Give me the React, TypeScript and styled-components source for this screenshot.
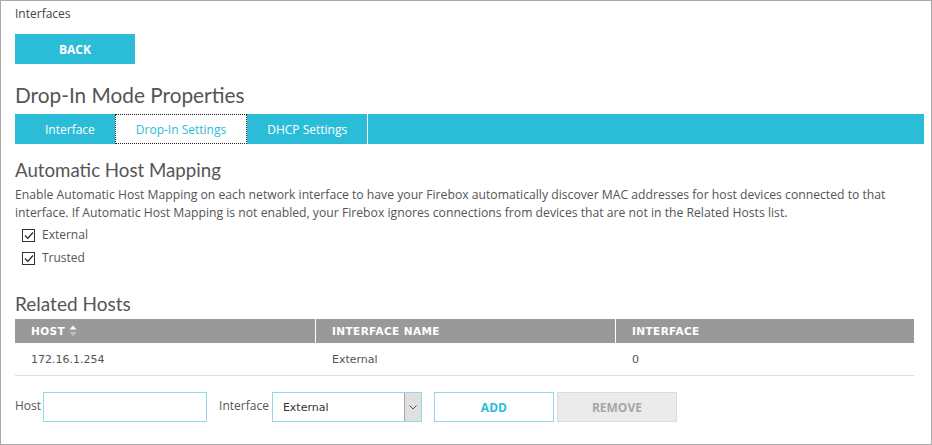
import React from 'react';
import styled, { createGlobalStyle } from 'styled-components';

const cyan = '#2bbdd8';
const text = '#555555';

const GlobalStyle = createGlobalStyle`
  html, body {
    margin: 0;
    padding: 0;
    background: #ffffff;
  }
  * {
    box-sizing: border-box;
  }
`;

const Frame = styled.div`
  width: 932px;
  height: 445px;
  border: 1px solid #aaaaaa;
  padding: 5px 0 0 14px;
  font-family: 'Open Sans', 'Liberation Sans', sans-serif;
  color: ${text};
  overflow: hidden;
`;

const Breadcrumb = styled.div`
  font-size: 12px;
  line-height: 16px;
  color: #444;
`;

const BackButton = styled.button`
  margin-top: 12px;
  width: 120px;
  height: 30px;
  border: none;
  background: ${cyan};
  color: #fff;
  font-family: 'Open Sans', sans-serif;
  font-weight: 700;
  font-size: 12px;
  padding: 0;
  display: block;
`;

const Title = styled.h1<{ size: number }>`
  margin: 0;
  font-family: 'Lato', 'Open Sans', sans-serif;
  font-weight: 400;
  font-size: ${(p) => p.size}px;
  color: ${text};
  line-height: 24px;
`;

const PageTitle = styled(Title)`
  margin-top: 19px;
`;

const TabBar = styled.div`
  margin-top: 7px;
  width: 909px;
  height: 30px;
  background: ${cyan};
  display: flex;
`;

const Tab = styled.div<{ active?: boolean; first?: boolean }>`
  height: 30px;
  padding: ${(p) => (p.first ? '0 20px 0 30px' : '0 20px')};
  display: flex;
  align-items: center;
  justify-content: center;
  font-size: 12px;
  color: ${(p) => (p.active ? cyan : '#fff')};
  background: ${(p) => (p.active ? '#fff' : 'transparent')};
  border: ${(p) => (p.active ? '1px dotted #222' : 'none')};
  border-right: ${(p) =>
    p.active ? '1px dotted #222' : p.first ? 'none' : '1px solid #fff'};
`;

const SectionTitle = styled(Title)`
  margin-top: 14px;
`;

const Paragraph = styled.p`
  margin: 4px 0 0;
  font-size: 12.2px;
  line-height: 18px;
  width: 890px;
`;

const CheckList = styled.div`
  margin-top: 4px;
  padding-left: 7px;
  display: flex;
  flex-direction: column;
  gap: 5px;
`;

const CheckRow = styled.label`
  display: flex;
  align-items: center;
  gap: 7px;
  font-size: 12px;
  line-height: 18px;
`;

const Box = styled.span`
  width: 13px;
  height: 13px;
  border: 1px solid #333;
  display: flex;
  align-items: center;
  justify-content: center;
  background: #fff;
`;

const RelatedTitle = styled(Title)`
  margin-top: 25px;
`;

const Table = styled.div`
  margin-top: 3px;
  width: 899px;
  font-family: 'DejaVu Sans', Verdana, sans-serif;
`;

const HeadRow = styled.div`
  display: grid;
  grid-template-columns: 300px 300px 1fr;
  height: 24px;
  background: #999999;
`;

const HeadCell = styled.div`
  display: flex;
  align-items: center;
  gap: 4px;
  padding-left: 16px;
  color: #fff;
  font-weight: 700;
  font-size: 10.5px;
  letter-spacing: 0.4px;
  border-left: 1px solid #fff;
  &:first-child {
    border-left: none;
  }
`;

const BodyRow = styled.div`
  display: grid;
  grid-template-columns: 300px 300px 1fr;
  height: 33px;
  border-bottom: 1px solid #dddddd;
`;

const BodyCell = styled.div`
  display: flex;
  align-items: center;
  padding-left: 16px;
  padding-top: 1px;
  font-size: 11px;
  color: #555;
  & + & {
    padding-left: 17px;
  }
`;

const Form = styled.div`
  margin-top: 16px;
  display: flex;
  align-items: center;
  height: 30px;
`;

const FieldLabel = styled.span<{ gap: number }>`
  font-size: 12px;
  margin-right: ${(p) => p.gap}px;
  margin-top: -3px;
`;

const TextInput = styled.input`
  width: 164px;
  height: 30px;
  border: 1px solid #93d8e6;
  margin-right: 12px;
  outline: none;
`;

const SelectBox = styled.div`
  width: 150px;
  height: 30px;
  border: 1px solid #93d8e6;
  display: flex;
  align-items: stretch;
  margin-right: 12px;
`;

const SelectValue = styled.span`
  flex: 1;
  display: flex;
  align-items: center;
  padding-left: 10px;
  font-family: 'DejaVu Sans', Verdana, sans-serif;
  font-size: 11px;
  color: #333;
`;

const SelectArrow = styled.span`
  width: 17px;
  background: #e0e0e0;
  border-left: 1px solid #a9a9a9;
  display: flex;
  align-items: center;
  justify-content: center;
`;

const ActionButton = styled.button<{ disabled?: boolean }>`
  width: 120px;
  height: 30px;
  margin-right: 3px;
  padding: 0;
  font-family: 'Open Sans', sans-serif;
  font-weight: 700;
  font-size: 12px;
  background: ${(p) => (p.disabled ? '#ebebeb' : '#fff')};
  color: ${(p) => (p.disabled ? '#a6a6a6' : cyan)};
  border: 1px solid ${(p) => (p.disabled ? '#dcdcdc' : '#93d8e6')};
`;

const Check = () => (
  <Box>
    <svg width="10" height="9" viewBox="0 0 10 9">
      <path d="M1 4.5 L3.8 7.3 L9 1.5" fill="none" stroke="#222" strokeWidth="1.2" />
    </svg>
  </Box>
);

const SortIcon = () => (
  <svg width="8" height="12" viewBox="0 0 8 12">
    <path d="M4 0.5 L7.5 4.5 L0.5 4.5 Z" fill="#ffffff" />
    <path d="M4 11.5 L7.5 7 L0.5 7 Z" fill="#bdbdbd" />
  </svg>
);

const App: React.FC = () => {
  return (
    <>
      <GlobalStyle />
      <Frame>
        <Breadcrumb>Interfaces</Breadcrumb>
        <BackButton>BACK</BackButton>
        <PageTitle size={20.8}>Drop-In Mode Properties</PageTitle>
        <TabBar>
          <Tab first>Interface</Tab>
          <Tab active>Drop-In Settings</Tab>
          <Tab>DHCP Settings</Tab>
        </TabBar>
        <SectionTitle size={18.7}>Automatic Host Mapping</SectionTitle>
        <Paragraph>
          Enable Automatic Host Mapping on each network interface to have your Firebox automatically discover MAC addresses for host devices connected to that interface. If Automatic Host Mapping is not enabled, your Firebox ignores connections from devices that are not in the Related Hosts list.
        </Paragraph>
        <CheckList>
          <CheckRow>
            <Check />
            External
          </CheckRow>
          <CheckRow>
            <Check />
            Trusted
          </CheckRow>
        </CheckList>
        <RelatedTitle size={19}>Related Hosts</RelatedTitle>
        <Table>
          <HeadRow>
            <HeadCell>
              HOST <SortIcon />
            </HeadCell>
            <HeadCell>INTERFACE NAME</HeadCell>
            <HeadCell>INTERFACE</HeadCell>
          </HeadRow>
          <BodyRow>
            <BodyCell>172.16.1.254</BodyCell>
            <BodyCell>External</BodyCell>
            <BodyCell>0</BodyCell>
          </BodyRow>
        </Table>
        <Form>
          <FieldLabel gap={2}>Host</FieldLabel>
          <TextInput />
          <FieldLabel gap={3}>Interface</FieldLabel>
          <SelectBox>
            <SelectValue>External</SelectValue>
            <SelectArrow>
              <svg width="8" height="5" viewBox="0 0 8 5">
                <path d="M0.5 0.5 L4 4 L7.5 0.5" fill="none" stroke="#555" strokeWidth="1" />
              </svg>
            </SelectArrow>
          </SelectBox>
          <ActionButton>ADD</ActionButton>
          <ActionButton disabled>REMOVE</ActionButton>
        </Form>
      </Frame>
    </>
  );
};

export default App;
